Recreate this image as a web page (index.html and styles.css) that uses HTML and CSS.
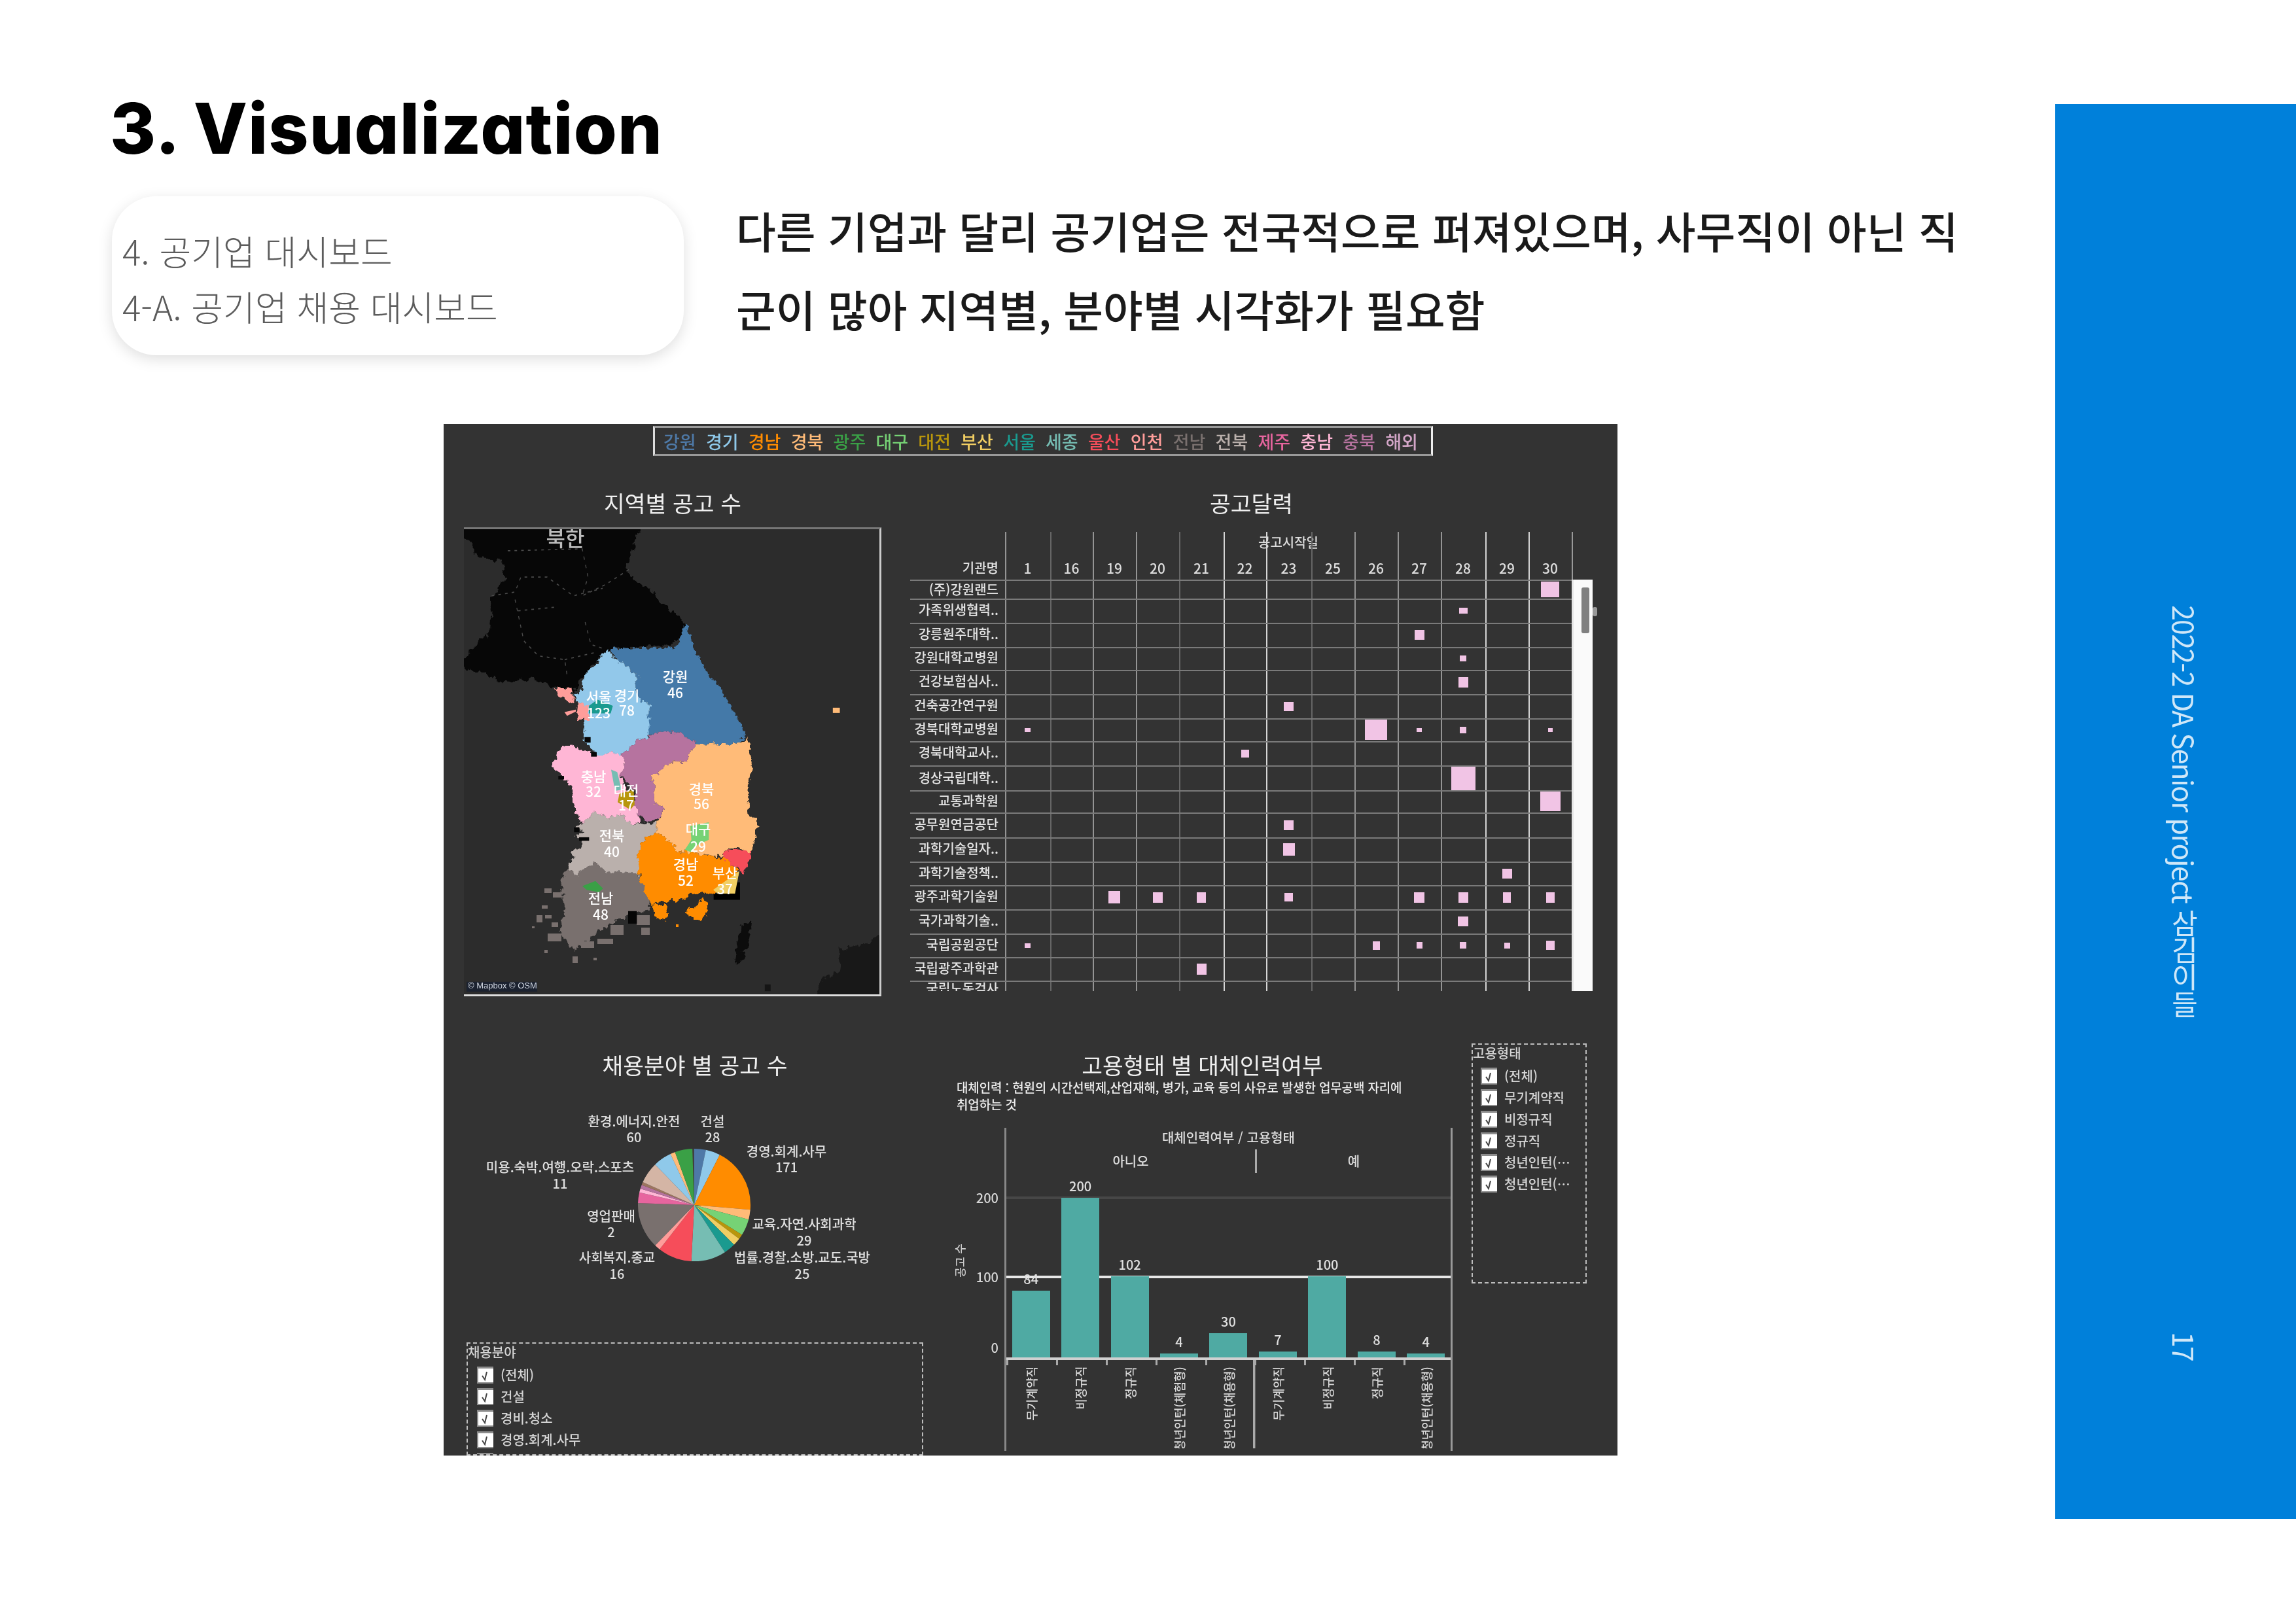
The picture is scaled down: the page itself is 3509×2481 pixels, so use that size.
FILE: index.html
```html
<!DOCTYPE html>
<html lang="ko">
<head>
<meta charset="utf-8">
<title>3. Visualization</title>
<link rel="stylesheet" href="styles.css">
</head>
<body>
<svg class="defs" width="0" height="0" aria-hidden="true">
  <symbol id="chk" viewBox="0 0 25 26">
    <rect width="25" height="26" fill="#8c8c8c"/>
    <rect x="2" y="3" width="23" height="21" fill="#fff"/>
    <path d="M8 14l4 6 3-12" fill="none" stroke="#444" stroke-width="2"/>
  </symbol>
  <filter id="rough" x="-5%" y="-5%" width="110%" height="110%" color-interpolation-filters="sRGB">
    <feTurbulence type="fractalNoise" baseFrequency=".045" numOctaves="3" seed="4"/>
    <feDisplacementMap in="SourceGraphic" scale="34" xChannelSelector="R" yChannelSelector="G"/>
  </filter>
</svg>
<div class="slide">
  <main class="main">
    <h1 class="title">3. Visualization</h1>
    <div class="intro">
      <div class="card">
        <p>4. 공기업 대시보드</p>
        <p>4-A. 공기업 채용 대시보드</p>
      </div>
      <p class="lead">다른 기업과 달리 공기업은 전국적으로 퍼져있으며, 사무직이 아닌 직<br>군이 많아 지역별, 분야별 시각화가 필요함</p>
    </div>

    <section class="dash">
      <div class="legend">
        <span class="c-gw">강원</span><span class="c-gg">경기</span><span class="c-gn">경남</span><span class="c-gb">경북</span><span class="c-gj">광주</span><span class="c-dg">대구</span><span class="c-dj">대전</span><span class="c-bs">부산</span><span class="c-se">서울</span><span class="c-sj">세종</span><span class="c-us">울산</span><span class="c-ic">인천</span><span class="c-jn">전남</span><span class="c-jb">전북</span><span class="c-jj">제주</span><span class="c-cn">충남</span><span class="c-cb">충북</span><span class="c-hw">해외</span>
      </div>

      <div class="row-top">
        <div class="panel-map">
          <h2 class="ptitle">지역별 공고 수</h2>
          <div class="map">
            <svg viewBox="709 808 635 711" preserveAspectRatio="none">
              <rect x="709" y="808" width="635" height="711" fill="#2c2c2c"/>
              <g transform="translate(680 640) scale(.4464 .574)">
                <g filter="url(#rough)">
                  <polygon fill="#070707" points="40,260 690,260 645,330 620,410 690,445 740,490 810,530 820,550 800,590 740,605 560,610 520,650 470,690 440,725 375,715 290,690 215,700 130,680 40,650 100,610 155,560 160,480 210,420 195,380 100,360 100,330 40,320"/>
                  <polygon fill="#181818" points="1350,1410 1430,1400 1520,1365 1520,1560 1260,1560 1290,1490 1350,1470"/>
                  <polygon fill="#0c0c0c" points="1020,1345 1052,1340 1040,1390 1010,1450 990,1450 1000,1400"/>
                </g>
                <g fill="none" stroke="#4a4a4a" stroke-width="3" stroke-dasharray="9 14">
                  <path d="M215 350L470 345L490 420L470 470L550 440L640 395"/>
                  <path d="M160 470L240 460L260 420L350 420L440 470L540 450"/>
                  <path d="M240 480L270 590L320 630L410 640L420 690"/>
                  <path d="M250 510L380 500M480 540L500 600L540 610"/>
                  <path d="M410 640L520 620"/>
                </g>
                <rect x="1095" y="1505" width="20" height="18" fill="#151515"/>
                <rect x="1328" y="768" width="24" height="14" fill="#ffbb78"/>
                <rect x="74" y="1498" width="242" height="26" fill="#1b2230"/>
              </g>
              <g transform="translate(800 900) scale(.3333 .3827)">
                <polygon fill="#000" points="872,1215 960,1215 960,1170 993,1170 993,1240 872,1240"/>
                <g filter="url(#rough)">
                  <polygon fill="#79706e" points="330,1090 380,1135 460,1125 525,1140 580,1225 575,1280 520,1290 470,1310 430,1320 340,1370 300,1400 230,1440 160,1360 190,1300 170,1160 205,1110 240,1140"/>
                  <polygon fill="#bab0ac" points="330,890 380,910 450,900 500,940 610,930 610,970 540,1010 525,1060 540,1100 525,1140 460,1125 380,1135 330,1090 240,1140 205,1110 235,1070 215,1050 280,1020 240,980 280,970 230,948 270,935"/>
                  <polygon fill="#ffbb78" points="605,800 590,750 620,730 680,685 750,690 760,660 800,615 880,620 985,615 1030,595 1050,710 1035,770 1030,900 1075,920 1050,1040 1040,1060 1000,1030 935,1030 915,1070 800,1050 695,1045 690,1020 610,970 610,930 630,910 640,870 600,850"/>
                  <polygon fill="#4479a8" points="395,240 440,235 560,232 700,232 725,190 735,145 755,150 775,215 810,280 850,340 925,420 1010,560 1015,590 985,615 880,620 800,615 720,575 620,565 570,590 575,480 590,465 520,430 510,380 530,350 490,320 440,290"/>
                  <polygon fill="#92c8ea" points="385,245 440,290 490,320 530,350 510,380 520,430 590,465 575,480 575,590 535,600 450,660 390,650 340,665 300,620 275,600 280,520 295,470 240,450 230,420 270,400 275,345 330,300 355,265"/>
                  <polygon fill="#b6739f" points="450,660 535,600 575,590 620,565 720,575 800,615 760,660 750,690 680,685 620,730 590,750 605,800 600,850 640,870 630,910 570,930 530,900 510,860 510,800 440,740 470,700"/>
                  <polygon fill="#ffb6d5" points="180,630 225,620 330,665 390,650 450,660 470,700 440,740 510,860 530,900 535,930 500,940 450,900 380,910 330,890 270,935 235,885 225,800 180,740 125,705 150,665"/>
                  <polygon fill="#ff8c00" points="540,1010 610,970 690,1020 695,1045 800,1050 920,1075 980,1110 985,1130 930,1180 880,1210 810,1210 770,1215 720,1240 640,1250 590,1260 570,1230 530,1150 525,1060"/>
                  <polygon fill="#ff8c00" points="592,1262 660,1262 655,1315 610,1320"/>
                  <polygon fill="#ff8c00" points="752,1270 790,1270 825,1225 842,1260 840,1300 810,1320 750,1300"/>
                  <polygon fill="#f64d5a" points="915,1075 935,1035 990,1040 1045,1045 1040,1085 1005,1135 985,1110"/>
                  <polygon fill="#ff9d9a" points="140,395 220,390 230,455 190,445 160,425"/>
                  <polygon fill="#ff9d9a" points="250,455 295,465 295,520 260,520 245,490"/>
                </g>
                <polygon fill="#ff9d9a" points="188,490 240,480 240,488 200,505"/>
                <polygon fill="#76bdb3" points="402,720 430,730 450,800 420,805"/>
                <polygon fill="#b8960c" points="440,815 505,800 510,860 490,880 432,850"/>
                <polygon fill="#3aa046" points="270,1185 330,1165 365,1195 345,1210 290,1200"/>
                <polygon fill="#76d275" points="765,945 850,930 850,1000 800,1020 770,1050 740,1040 770,1000"/>
                <polygon fill="#f1ce63" points="870,1200 990,1125 970,1215 890,1215"/>
                <polygon fill="#1a9a8f" points="300,465 340,440 410,465 400,495 300,495"/>
                <g fill="#79706e" shape-rendering="crispEdges">
                  <rect x="95" y="1195" width="35" height="18"/><rect x="135" y="1210" width="40" height="22"/>
                  <rect x="60" y="1300" width="28" height="30"/><rect x="100" y="1300" width="30" height="15"/>
                  <rect x="85" y="1262" width="25" height="14"/><rect x="40" y="1345" width="12" height="8"/>
                  <rect x="110" y="1375" width="65" height="32"/><rect x="95" y="1440" width="16" height="12"/>
                  <rect x="225" y="1465" width="25" height="28"/><rect x="320" y="1470" width="16" height="12"/>
                  <rect x="265" y="1405" width="60" height="28"/><rect x="340" y="1395" width="70" height="20"/>
                  <rect x="400" y="1340" width="60" height="40"/><rect x="520" y="1300" width="60" height="40"/>
                  <rect x="540" y="1350" width="40" height="30"/><rect x="130" y="1330" width="30" height="18"/>
                </g>
                <g fill="#ff8c00" shape-rendering="crispEdges">
                  <rect x="700" y="1338" width="12" height="10"/><rect x="780" y="1290" width="30" height="30"/>
                </g>
                <g fill="#060606">
                  <rect x="280" y="590" width="28" height="22"/><rect x="232" y="950" width="24" height="20"/>
                  <rect x="255" y="990" width="46" height="14"/><rect x="480" y="1285" width="40" height="50"/>
                  <rect x="310" y="650" width="26" height="18"/><rect x="160" y="745" width="26" height="14"/>
                </g>
              </g>
              <text class="mlabel north" x="864" y="820">북한</text>
              <text class="mlabel" x="1032" y="1032">강원</text><text class="mlabel" x="1032" y="1057">46</text>
              <text class="mlabel" x="958" y="1061">경기</text><text class="mlabel" x="958" y="1084">78</text>
              <text class="mlabel" x="915" y="1063">서울</text><text class="mlabel" x="915" y="1088">123</text>
              <text class="mlabel" x="907" y="1185">충남</text><text class="mlabel" x="907" y="1208">32</text>
              <text class="mlabel" x="957" y="1206">대전</text><text class="mlabel" x="957" y="1229">17</text>
              <text class="mlabel" x="1072" y="1204">경북</text><text class="mlabel" x="1072" y="1227">56</text>
              <text class="mlabel" x="1067" y="1265">대구</text><text class="mlabel" x="1067" y="1292">29</text>
              <text class="mlabel" x="935" y="1275">전북</text><text class="mlabel" x="935" y="1300">40</text>
              <text class="mlabel" x="1048" y="1319">경남</text><text class="mlabel" x="1048" y="1344">52</text>
              <text class="mlabel" x="1108" y="1332">부산</text><text class="mlabel" x="1108" y="1357">37</text>
              <text class="mlabel" x="918" y="1371">전남</text><text class="mlabel" x="918" y="1396">48</text>
              <text class="attrib" x="715" y="1510">© Mapbox © OSM</text>
            </svg>
          </div>
        </div>

        <div class="panel-cal">
          <h2 class="ptitle">공고달력</h2>
          <div class="cal">
            <div class="cal-lines">
              <i class="ln-b"></i><i class="ln-c"></i><i class="ln-b"></i><i class="ln-b"></i><i class="ln-c"></i><i class="ln-a"></i><i class="ln-a"></i><i class="ln-c"></i><i class="ln-b"></i><i class="ln-b"></i><i class="ln-b"></i><i class="ln-a"></i><i class="ln-a"></i><i class="ln-end"></i>
            </div>
            <div class="cal-h1">공고시작일</div>
            <div class="cal-h2">
              <span class="org">기관명</span><b>1</b><b>16</b><b>19</b><b>20</b><b>21</b><b>22</b><b>23</b><b>25</b><b>26</b><b>27</b><b>28</b><b>29</b><b>30</b>
            </div>
            <div class="cal-body">
              <div class="crow crow-first"><span class="org">(주)강원랜드</span><i class="mk d30" style="width:28px;height:24px"></i></div>
              <div class="crow"><span class="org">가족위생협력..</span><i class="mk d28" style="width:13px;height:9px"></i></div>
              <div class="crow"><span class="org">강릉원주대학..</span><i class="mk d27" style="width:15px;height:15px"></i></div>
              <div class="crow"><span class="org">강원대학교병원</span><i class="mk d28" style="width:10px;height:9px"></i></div>
              <div class="crow"><span class="org">건강보험심사..</span><i class="mk d28" style="width:15px;height:16px"></i></div>
              <div class="crow"><span class="org">건축공간연구원</span><i class="mk d23" style="width:15px;height:14px"></i></div>
              <div class="crow"><span class="org">경북대학교병원</span><i class="mk d1" style="width:9px;height:6px"></i><i class="mk d26" style="width:34px;height:31px"></i><i class="mk d27" style="width:8px;height:6px"></i><i class="mk d28" style="width:10px;height:10px"></i><i class="mk d30" style="width:7px;height:6px"></i></div>
              <div class="crow"><span class="org">경북대학교사..</span><i class="mk d22" style="width:12px;height:12px"></i></div>
              <div class="crow"><span class="org">경상국립대학..</span><i class="mk d28" style="width:37px;height:36px"></i></div>
              <div class="crow"><span class="org">교통과학원</span><i class="mk d30" style="width:31px;height:30px"></i></div>
              <div class="crow"><span class="org">공무원연금공단</span><i class="mk d23" style="width:15px;height:15px"></i></div>
              <div class="crow"><span class="org">과학기술일자..</span><i class="mk d23" style="width:18px;height:19px"></i></div>
              <div class="crow"><span class="org">과학기술정책..</span><i class="mk d29" style="width:15px;height:15px"></i></div>
              <div class="crow"><span class="org">광주과학기술원</span><i class="mk d19" style="width:18px;height:19px"></i><i class="mk d20" style="width:15px;height:16px"></i><i class="mk d21" style="width:14px;height:16px"></i><i class="mk d23" style="width:13px;height:13px"></i><i class="mk d27" style="width:16px;height:16px"></i><i class="mk d28" style="width:15px;height:16px"></i><i class="mk d29" style="width:12px;height:16px"></i><i class="mk d30" style="width:13px;height:16px"></i></div>
              <div class="crow"><span class="org">국가과학기술..</span><i class="mk d28" style="width:16px;height:15px"></i></div>
              <div class="crow"><span class="org">국립공원공단</span><i class="mk d1" style="width:9px;height:7px"></i><i class="mk d26" style="width:11px;height:13px"></i><i class="mk d27" style="width:9px;height:10px"></i><i class="mk d28" style="width:10px;height:10px"></i><i class="mk d29" style="width:9px;height:9px"></i><i class="mk d30" style="width:13px;height:14px"></i></div>
              <div class="crow"><span class="org">국립광주과학관</span><i class="mk d21" style="width:15px;height:17px"></i></div>
              <div class="crow crow-last"><span class="org">국립노동검사</span><i class="mk mk-cut d27" style="width:10px;height:4px"></i><i class="mk mk-cut d29" style="width:6px;height:4px"></i></div>
            </div>
            <div class="scroll"><i class="thumb"></i><i class="knob"></i></div>
          </div>
        </div>
      </div>

      <div class="row-bottom">
        <div class="panel-pie">
          <h2 class="ptitle">채용분야 별 공고 수</h2>
          <svg class="pie" viewBox="713 1646 698 405">
            <g fill="none" stroke-width="86" transform="rotate(-90 1061 1841)">
              <circle cx="1061" cy="1841" r="43" pathLength="360" stroke="#3f3f3f" stroke-dasharray="360 0"/>
              <circle cx="1061" cy="1841" r="43" pathLength="360" stroke="#4e79a7" stroke-dasharray="12 348"/>
              <circle cx="1061" cy="1841" r="43" pathLength="360" stroke="#8fc9ea" stroke-dasharray="15 345" stroke-dashoffset="-12"/>
              <circle cx="1061" cy="1841" r="43" pathLength="360" stroke="#ff8c00" stroke-dasharray="68 292" stroke-dashoffset="-27"/>
              <circle cx="1061" cy="1841" r="43" pathLength="360" stroke="#ffbb78" stroke-dasharray="10 350" stroke-dashoffset="-95"/>
              <circle cx="1061" cy="1841" r="43" pathLength="360" stroke="#76d275" stroke-dasharray="17 343" stroke-dashoffset="-105"/>
              <circle cx="1061" cy="1841" r="43" pathLength="360" stroke="#b8960c" stroke-dasharray="5 355" stroke-dashoffset="-122"/>
              <circle cx="1061" cy="1841" r="43" pathLength="360" stroke="#f1ce63" stroke-dasharray="8 352" stroke-dashoffset="-127"/>
              <circle cx="1061" cy="1841" r="43" pathLength="360" stroke="#1a9a8f" stroke-dasharray="12 348" stroke-dashoffset="-135"/>
              <circle cx="1061" cy="1841" r="43" pathLength="360" stroke="#76bdb3" stroke-dasharray="36 324" stroke-dashoffset="-147"/>
              <circle cx="1061" cy="1841" r="43" pathLength="360" stroke="#f64d5a" stroke-dasharray="35 325" stroke-dashoffset="-183"/>
              <circle cx="1061" cy="1841" r="43" pathLength="360" stroke="#ff9d9a" stroke-dasharray="6 354" stroke-dashoffset="-218"/>
              <circle cx="1061" cy="1841" r="43" pathLength="360" stroke="#79706e" stroke-dasharray="48 312" stroke-dashoffset="-224"/>
              <circle cx="1061" cy="1841" r="43" pathLength="360" stroke="#e7659f" stroke-dasharray="11 349" stroke-dashoffset="-272"/>
              <circle cx="1061" cy="1841" r="43" pathLength="360" stroke="#ffb6d5" stroke-dasharray="4 356" stroke-dashoffset="-283"/>
              <circle cx="1061" cy="1841" r="43" pathLength="360" stroke="#b6739f" stroke-dasharray="4 356" stroke-dashoffset="-287"/>
              <circle cx="1061" cy="1841" r="43" pathLength="360" stroke="#9c755f" stroke-dasharray="3 357" stroke-dashoffset="-291"/>
              <circle cx="1061" cy="1841" r="43" pathLength="360" stroke="#d4b5a5" stroke-dasharray="22 338" stroke-dashoffset="-294"/>
              <circle cx="1061" cy="1841" r="43" pathLength="360" stroke="#8fc9ea" stroke-dasharray="19 341" stroke-dashoffset="-316"/>
              <circle cx="1061" cy="1841" r="43" pathLength="360" stroke="#ffbb78" stroke-dasharray="5 355" stroke-dashoffset="-335"/>
              <circle cx="1061" cy="1841" r="43" pathLength="360" stroke="#3aa046" stroke-dasharray="18 342" stroke-dashoffset="-340"/>
            </g>
            <g class="plabels">
              <text x="969" y="1712">환경.에너지.안전</text><text x="969" y="1736">60</text>
              <text x="1089" y="1712">건설</text><text x="1089" y="1736">28</text>
              <text x="1202" y="1758">경영.회계.사무</text><text x="1202" y="1782">171</text>
              <text x="856" y="1782">미용.숙박.여행.오락.스포츠</text><text x="856" y="1807">11</text>
              <text x="934" y="1857">영업판매</text><text x="934" y="1881">2</text>
              <text x="1229" y="1869">교육.자연.사회과학</text><text x="1229" y="1894">29</text>
              <text x="943" y="1920">사회복지.종교</text><text x="943" y="1945">16</text>
              <text x="1226" y="1920">법률.경찰.소방.교도.국방</text><text x="1226" y="1945">25</text>
            </g>
          </svg>
          <div class="filter filter-field">
            <div class="f-title">채용분야</div>
            <label class="f-row"><svg class="chk"><use href="#chk"/></svg>(전체)</label>
            <label class="f-row"><svg class="chk"><use href="#chk"/></svg>건설</label>
            <label class="f-row"><svg class="chk"><use href="#chk"/></svg>경비.청소</label>
            <label class="f-row"><svg class="chk"><use href="#chk"/></svg>경영.회계.사무</label>
            <label class="f-row"><svg class="chk"><use href="#chk"/></svg>교육.자연.사회과학</label>
          </div>
        </div>

        <div class="panel-bars">
          <h2 class="ptitle">고용형태 별 대체인력여부</h2>
          <p class="note">대체인력 : 현원의 시간선택제,산업재해, 병가, 교육 등의 사유로 발생한 업무공백 자리에<br>취업하는 것</p>
          <div class="plot">
            <div class="plot-h1">대체인력여부 / 고용형태</div>
            <div class="plot-h2"><span>아니오</span><span>예</span></div>
            <div class="bars">
              <i class="grid g200"></i><i class="grid g100"></i>
              <span class="tick t200">200</span><span class="tick t100">100</span><span class="tick t0">0</span>
              <span class="yname">공고 수</span>
              <div class="bar"><span>84</span><i style="height:102px"></i></div>
              <div class="bar"><span>200</span><i style="height:244px"></i></div>
              <div class="bar"><span>102</span><i style="height:124px"></i></div>
              <div class="bar"><span>4</span><i style="height:6px"></i></div>
              <div class="bar"><span>30</span><i style="height:37px"></i></div>
              <div class="bar"><span>7</span><i style="height:9px"></i></div>
              <div class="bar"><span>100</span><i style="height:124px"></i></div>
              <div class="bar"><span>8</span><i style="height:9px"></i></div>
              <div class="bar"><span>4</span><i style="height:6px"></i></div>
            </div>
            <div class="xlabels">
              <span>무기계약직</span><span>비정규직</span><span>정규직</span><span>청년인턴(체험형)</span><span class="col-end">청년인턴(채용형)</span><span>무기계약직</span><span>비정규직</span><span>정규직</span><span>청년인턴(채용형)</span>
            </div>
          </div>
        </div>

        <div class="filter filter-type">
          <div class="f-title">고용형태</div>
          <label class="f-row"><svg class="chk"><use href="#chk"/></svg>(전체)</label>
          <label class="f-row"><svg class="chk"><use href="#chk"/></svg>무기계약직</label>
          <label class="f-row"><svg class="chk"><use href="#chk"/></svg>비정규직</label>
          <label class="f-row"><svg class="chk"><use href="#chk"/></svg>정규직</label>
          <label class="f-row"><svg class="chk"><use href="#chk"/></svg>청년인턴(…</label>
          <label class="f-row"><svg class="chk"><use href="#chk"/></svg>청년인턴(…</label>
        </div>
      </div>
    </section>
  </main>

  <aside class="side">
    <span class="side-name">2022-2 DA Senior project 삼김이들</span>
    <span class="side-page">17</span>
  </aside>
</div>
</body>
</html>
```

FILE: styles.css
```css
* { box-sizing: border-box; }
html, body { margin: 0; padding: 0; background: #fff; }
body { width: 3509px; height: 2481px; overflow: hidden; font-family: "Noto Sans CJK KR", "Noto Sans", sans-serif; }
.defs { position: absolute; }
p, h1, h2 { margin: 0; font-weight: inherit; }

.slide { display: flex; width: 3509px; height: 2481px; }
.main { flex: 0 0 3141px; padding: 0 0 0 171px; }

.title {
  font-family: Inter, "Noto Sans", sans-serif;
  font-feature-settings: "cv11" 1;
  font-weight: 800;
  font-size: 107px;
  line-height: 120px;
  letter-spacing: 1px;
  color: #000;
  margin: 136px 0 0 -3px;
  filter: blur(.6px);
}

.intro { display: flex; margin-top: 44px; height: 348px; }
.card {
  width: 874px; height: 243px;
  border-radius: 68px;
  background: #fff;
  box-shadow: 0 6px 22px rgba(0, 0, 0, .13);
  padding: 41px 0 0 16px;
  font-size: 53px;
  line-height: 85px;
  font-weight: 300;
  color: #5c5c5c;
  filter: blur(.4px);
}
.lead {
  margin: -9px 0 0 80px;
  font-size: 66px;
  line-height: 120px;
  color: #1a1a1a;
  font-weight: 500;
  white-space: nowrap;
  filter: blur(.4px);
}

.dash {
  width: 1794px; height: 1577px;
  margin-left: 507px;
  background: #333;
  overflow: hidden;
  color: #e6e6e6;
  padding-top: 3px;
  font-weight: 500;
  filter: blur(.7px);
}

.legend {
  display: flex;
  justify-content: space-between;
  align-items: center;
  margin-left: 320px;
  width: 1192px;
  height: 46px;
  padding: 0 20px 0 13px;
  border: 3px solid #9a9a9a;
  border-left-color: #ddd;
  border-right-color: #eee;
  font-size: 27px;
  line-height: 1;
}
.c-gw { color: #4e79a7; } .c-gg { color: #8fc9ea; } .c-gn { color: #ff8c00; } .c-gb { color: #ffbb78; }
.c-gj { color: #3aa046; } .c-dg { color: #76d275; } .c-dj { color: #b8960c; } .c-bs { color: #f1ce63; }
.c-se { color: #1a9a8f; } .c-sj { color: #76bdb3; } .c-us { color: #f64d5a; } .c-ic { color: #ff9d9a; }
.c-jn { color: #79706e; } .c-jb { color: #bab0ac; } .c-jj { color: #e7659f; } .c-cn { color: #ffb6d5; }
.c-cb { color: #b6739f; } .c-hw { color: #d4a6c8; }

.ptitle { font-size: 34.5px; line-height: 40px; text-align: center; color: #efefef; font-weight: 400; }

.row-top { display: flex; margin-top: 51px; }
.panel-map { width: 638px; margin-left: 31px; }
.map {
  margin-top: 18px;
  height: 717px;
  border-top: 3px solid #777;
  border-right: 3px solid #ccc;
  border-bottom: 3px solid #ddd;
  overflow: hidden;
}
.map svg { display: block; width: 100%; height: 100%; }
.mlabel { font-size: 21px; fill: #fff; text-anchor: middle; dominant-baseline: central; }
.north { font-size: 32px; fill: #bdbdbd; }
.attrib { font-size: 13px; fill: #cdd3dd; font-family: "Liberation Sans", sans-serif; }

.panel-cal { width: 1043px; margin-left: 44px; }
.cal {
  --cols: 145px 69px 65px 66px 66px 68px 65px 69px 66px 66px 66px 68px 66px 66px;
  position: relative;
  margin-top: 25px;
  height: 702px;
  width: 1052px;
  overflow: hidden;
  font-size: 20px;
}
.cal-lines {
  position: absolute; left: 145px; top: 0; bottom: 0; width: 866px;
  display: grid;
  grid-template-columns: 69px 65px 66px 66px 68px 65px 69px 66px 66px 66px 68px 66px 66px 0;
}
.cal-lines i { border-left: 2px solid #888; }
.cal-lines .ln-a { border-left-color: #d6d6d6; }
.cal-lines .ln-b { border-left-color: #949494; }
.cal-lines .ln-c { border-left-color: #666; }
.cal-lines .ln-end { width: 2px; border-left-color: #999; }
.cal-h1 { height: 36px; padding-left: 145px; width: 1011px; text-align: center; line-height: 32px; color: #ddd; }
.cal-h2 { display: grid; grid-template-columns: var(--cols); height: 37px; align-items: center; width: 1011px; }
.cal-h2 b { font-weight: 500; text-align: center; color: #ddd; font-size: 21px; }
.org { text-align: right; padding-right: 10px; white-space: nowrap; color: #e4e4e4; line-height: 1; }
.cal-body {
  position: relative;
  width: 1011px;
  display: grid;
  grid-template-rows: 29px 37px 37px 35px 37px 37px 35px 37px 38px 34px 38px 37px 36px 37px 37px 36px 36px 16px;
}
.crow {
  display: grid;
  grid-template-columns: var(--cols);
  grid-template-rows: 1fr;
  align-items: center;
  border-top: 2.5px solid #7a7a7a;
}
.crow .org { grid-column: 1; grid-row: 1; margin-bottom: 5px; }
.crow-first .org { margin-bottom: 2px; }
.mk { grid-row: 1; justify-self: center; background: #f1c4e5; display: block; margin-bottom: 2px; }
.mk-cut { align-self: end; margin-bottom: 0; }
.d1 { grid-column: 2; } .d16 { grid-column: 3; } .d19 { grid-column: 4; } .d20 { grid-column: 5; }
.d21 { grid-column: 6; } .d22 { grid-column: 7; } .d23 { grid-column: 8; } .d25 { grid-column: 9; }
.d26 { grid-column: 10; } .d27 { grid-column: 11; } .d28 { grid-column: 12; } .d29 { grid-column: 13; } .d30 { grid-column: 14; }
.crow-last .org { align-self: start; margin-bottom: 0; }
.scroll {
  position: absolute; left: 1011px; top: 73px; width: 32px; height: 629px;
  background: #fafafa;
  border-left: 3px solid #e6e6e6;
}
.thumb { position: absolute; left: 12px; top: 12px; width: 12px; height: 70px; background: #808080; border-radius: 3px; }
.knob { position: absolute; left: 29px; top: 42px; width: 7px; height: 14px; background: #999; border-radius: 3px; }

.row-bottom { display: flex; margin-top: 72px; }
.panel-pie { width: 698px; margin-left: 35px; padding-top: 12px; }
.pie { display: block; width: 698px; height: 405px; }
.plabels text { font-size: 20px; fill: #e0e0e0; text-anchor: middle; dominant-baseline: central; }

.filter { border: 2px dashed #bdbdbd; font-size: 20px; color: #d4d4d4; line-height: 1; overflow: hidden; }
.filter-field { width: 698px; height: 173px; padding-left: 14px; }
.filter-type { width: 176px; height: 367px; margin-left: 29px; padding-left: 12px; }
.f-title { height: 31px; line-height: 26px; margin-left: -12px; }
.filter-field .f-title { margin-left: -14px; }
.f-row { display: flex; align-items: center; gap: 11px; height: 33px; white-space: nowrap; }
.chk { width: 25px; height: 26px; flex: none; }

.panel-bars { width: 765px; margin-left: 44px; padding-top: 12px; }
.note { margin: 2px 0 0 7px; font-size: 19px; line-height: 26px; color: #ececec; white-space: nowrap; letter-spacing: -.15px; }
.plot {
  margin: 23px 0 0 80px;
  width: 685px; height: 494px;
  border-left: 3px solid #888;
  border-right: 3px solid #999;
  font-size: 20px;
}
.plot-h1 { height: 33px; text-align: center; line-height: 30px; color: #ddd; }
.plot-h2 { display: grid; grid-template-columns: 380px 1fr; height: 36px; line-height: 36px; text-align: center; color: #ddd; }
.plot-h2 span:last-child { border-left: 3px solid #aaa; }
.bars { position: relative; display: grid; grid-template-columns: repeat(9, 1fr); height: 286px; border-bottom: 4px solid #d0d0d0; }
.grid { position: absolute; left: 0; right: 0; }
.g200 { top: 36px; height: 4px; background: #474747; }
.g100 { top: 157px; height: 4px; background: #e8e8e8; }
.tick { position: absolute; right: calc(100% + 12px); line-height: 24px; color: #d5d5d5; }
.t200 { top: 26px; } .t100 { top: 147px; } .t0 { top: 255px; }
.yname { position: absolute; left: -81px; top: 108px; writing-mode: vertical-rl; text-orientation: sideways; transform: rotate(180deg); font-size: 17px; line-height: 20px; color: #ccc; white-space: nowrap; }
.bar { position: relative; display: flex; flex-direction: column; align-items: center; justify-content: flex-end; }
.bar span { line-height: 26px; margin-bottom: 5px; color: #e0e0e0; }
.bar i { width: 58px; background: #4faaa3; display: block; }
.xlabels {
  display: grid;
  grid-template-columns: repeat(9, 1fr);
  height: 135px;
  overflow: hidden;
  background: repeating-linear-gradient(90deg, #aaa 0 3px, transparent 3px 75.9px) 0 0 / 100% 8px no-repeat;
}
.xlabels span { display: flex; justify-content: flex-end; align-items: center; writing-mode: vertical-rl; text-orientation: sideways; transform: rotate(180deg); font-size: 18px; line-height: 1; color: #d8d8d8; padding: 0 0 10px; white-space: nowrap; }
.xlabels .col-end { box-shadow: -3px 0 0 #aaa; }

.side {
  flex: 0 0 368px;
  align-self: flex-start;
  margin-top: 159px;
  height: 2163px;
  background: #0080da;
  display: flex;
  flex-direction: column;
  align-items: center;
  padding: 766px 0 0 27px;
  color: #cfe7f8;
  font-size: 43px;
  line-height: 1;
  letter-spacing: -1.8px;
}
.side-name, .side-page { writing-mode: vertical-rl; white-space: nowrap; display: block; filter: blur(.5px); }
.side-page { position: absolute; top: 2036px; }
```
